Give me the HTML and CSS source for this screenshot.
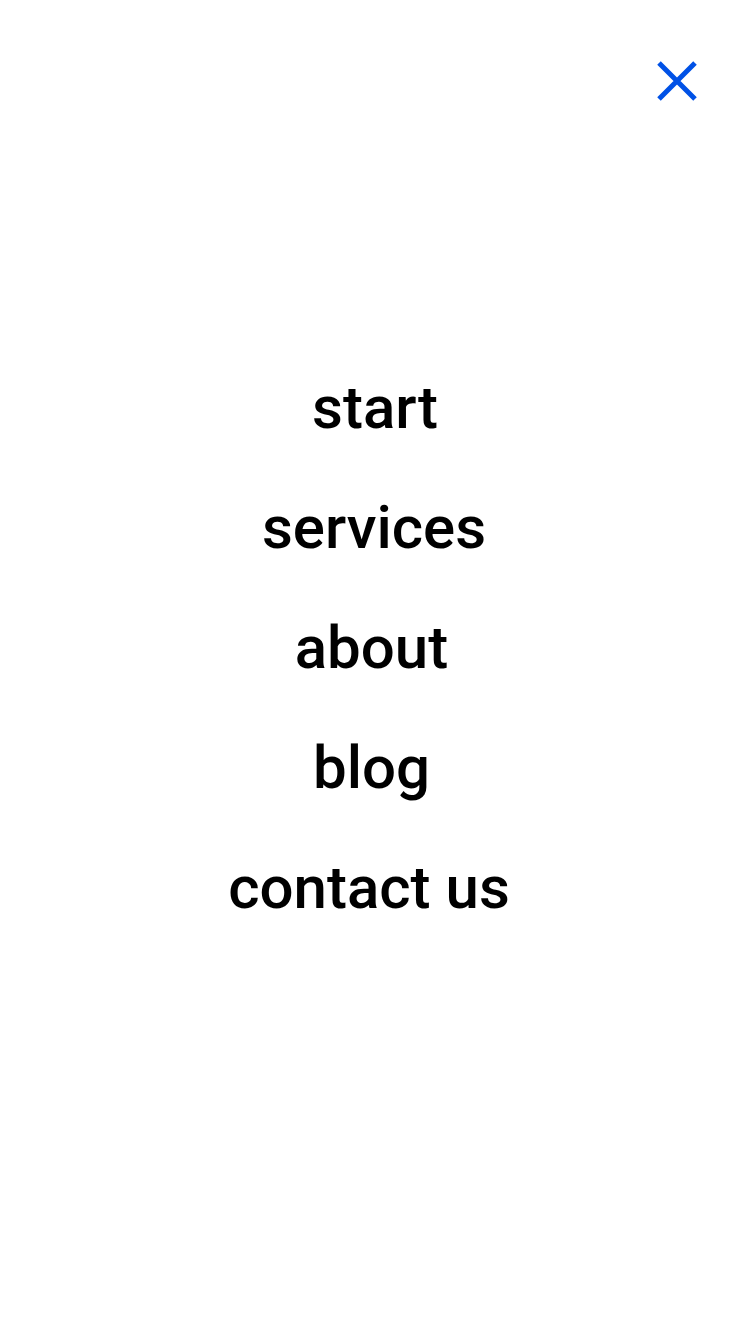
FILE: index.html
```html
<!DOCTYPE html>
<html>
<head>
<meta charset="utf-8">
<link rel="stylesheet" href="styles.css">
</head>
<body>
<div class="menu">
  <div class="top">
    <button class="close" aria-label="close">
      <svg width="44" height="44" viewBox="0 0 44 44"><path d="M4 4 L40 40 M40 4 L4 40" stroke="#0051e6" stroke-width="5" fill="none"/></svg>
    </button>
  </div>
  <nav class="links">
    <a href="#">start</a>
    <a href="#" class="shift-s">services</a>
    <a href="#" class="shift-m">about</a>
    <a href="#" class="shift-m">blog</a>
    <a href="#" class="shift-l">contact us</a>
  </nav>
</div>
</body>
</html>
```
FILE: styles.css
```css
html, body { margin: 0; padding: 0; background: #fff; }
body { font-family: Roboto, "Noto Sans", sans-serif; width: 750px; height: 1334px; }
.menu { display: flex; flex-direction: column; }
.top { display: flex; justify-content: flex-end; padding: 59px 51px 0 0; }
.close { background: none; border: 0; padding: 0; width: 44px; height: 44px; display: block; }
.close svg { display: block; }
.links { display: flex; flex-direction: column; align-items: center; margin-top: 245px; }
.links a { font-size: 60px; font-weight: 500; line-height: 120px; color: #000; text-decoration: none; }
.links .shift-s { margin-right: 2px; }
.links .shift-m { margin-right: 7px; }
.links .shift-l { margin-right: 12px; }
```
